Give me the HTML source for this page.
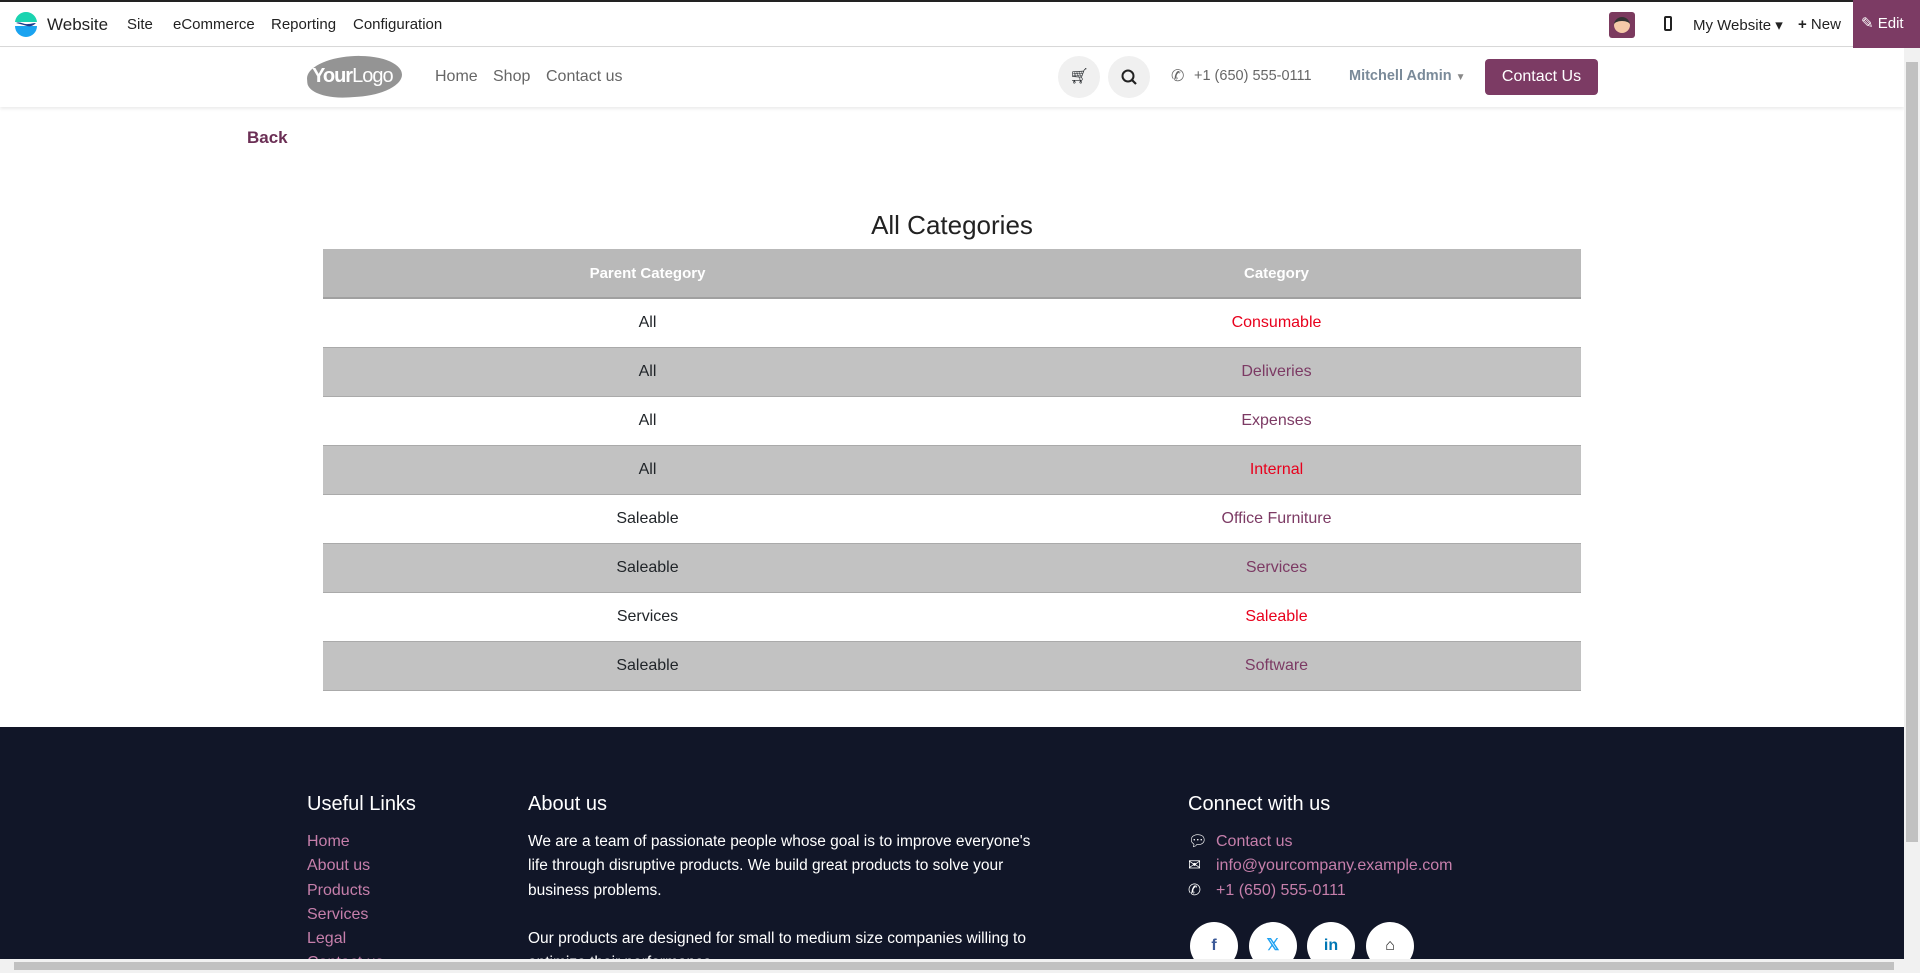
<!DOCTYPE html>
<html><head><meta charset="utf-8">
<style>
*{box-sizing:border-box;margin:0;padding:0}
body{width:1920px;height:973px;overflow:hidden;font-family:"Liberation Sans",sans-serif;background:#fff;position:relative;color:#212529}
.a{position:absolute;white-space:nowrap}
#top{position:absolute;left:0;top:0;width:1920px;height:47px;background:#fff;border-top:2px solid #222;border-bottom:1px solid #d8d8d8}
#top .t{font-size:15px;color:#222;top:14px}
#hdr{position:absolute;left:0;top:48px;width:1904px;height:59px;background:#fff;box-shadow:0 2px 3px rgba(0,0,0,.08)}
.nav{font-size:16px;color:#666;top:20px}
.circ{position:absolute;top:8px;width:42px;height:42px;border-radius:50%;background:#f0f0f0}
table{position:absolute;left:323px;top:249px;width:1258px;border-collapse:collapse;font-size:16px}
td,th{height:49px;text-align:center;width:50%;border-bottom:1px solid #aaa;padding-left:20px}
th{background:#b9b9b9;color:#fff;font-weight:bold;font-size:15px;border-bottom:2px solid #a0a0a0}
tr.g td{background:#c2c2c2}
.r{color:#e8001c}.p{color:#7c3a64}
#foot{position:absolute;left:0;top:727px;width:1904px;height:246px;background:#111628;color:#fff}
#foot h4{position:absolute;font-weight:normal;font-size:20px;top:66px}
.fl{font-size:16px;color:#c67fab;line-height:24.3px}
.ft{font-size:15.5px;line-height:24.3px;color:#fff}
.soc{position:absolute;top:195px;width:48px;height:48px;border-radius:50%;background:#fff;text-align:center;line-height:48px;font-size:16px;font-weight:bold}
</style></head><body>
<div id="top">
 <svg class="a" style="left:13px;top:9px" width="26" height="27" viewBox="0 0 26 27"><path d="M13 1a11 11 0 0 0-11 10h22A11 11 0 0 0 13 1z" fill="#1ad3b0"/><path d="M2 15h22a11 11 0 0 1-22 0z" fill="#1aa3f0"/><path d="M3 12c4-2 8 2 12 1 3 0 5-1 8-1-3 3-6 4-9 3s-7-2-11-3z" fill="#1c3d8c"/></svg>
 <span class="a" style="left:47px;top:13px;font-size:17px;color:#222">Website</span>
 <span class="a t" style="left:127px">Site</span>
 <span class="a t" style="left:173px">eCommerce</span>
 <span class="a t" style="left:271px">Reporting</span>
 <span class="a t" style="left:353px">Configuration</span>
 <div class="a" style="left:1609px;top:10px;width:26px;height:26px;background:#7b3a5e;border-radius:3px"><div style="margin:5px auto;width:16px;height:16px;border-radius:50%;background:#f5c9a8;border-top:4px solid #333"></div></div>
 <div class="a" style="left:1664px;top:14px;width:8px;height:15px;border:2px solid #222;border-radius:2px"></div>
 <span class="a t" style="left:1693px">My Website ▾</span>
 <span class="a t" style="left:1798px"><b>+</b> New</span>
 <div class="a" style="left:1853px;top:-2px;width:67px;height:48px;background:#7c3b64;color:#fff;font-size:15px;line-height:48px;padding-left:8px">✎ Edit</div>
</div>
<div id="hdr">
 <div class="a" style="left:307px;top:8px;width:95px;height:41px;background:#949494;border-radius:50% 55% 50% 45%;transform:rotate(-4deg)"></div>
 <span class="a" style="left:312px;top:17px;font-size:20px;color:#fff;letter-spacing:-1px"><b>Your</b>Logo</span>
 <span class="a nav" style="left:435px">Home</span>
 <span class="a nav" style="left:493px">Shop</span>
 <span class="a nav" style="left:546px">Contact us</span>
 <div class="circ" style="left:1058px;text-align:center;line-height:42px;font-size:15px">🛒︎</div>
 <div class="circ" style="left:1108px"><svg width="42" height="42"><circle cx="20" cy="20" r="5.5" fill="none" stroke="#222" stroke-width="2"/><path d="M24 24l4 4" stroke="#222" stroke-width="2.2"/></svg></div>
 <span class="a" style="left:1171px;top:18px;font-size:16px;color:#666">✆</span>
 <span class="a" style="left:1194px;top:20px;font-size:14.5px;color:#666">+1 (650) 555-0111</span>
 <span class="a" style="left:1349px;top:20px;font-size:14.5px;color:#7a8a99;font-weight:bold">Mitchell Admin <span style="font-size:10px;color:#888">▼</span></span>
 <div class="a" style="left:1485px;top:11px;width:113px;height:36px;background:#7c3b64;border-radius:4px;color:#fff;font-size:16px;text-align:center;line-height:36px">Contact Us</div>
</div>
<div class="a" style="left:1904px;top:48px;width:16px;height:911px;background:#f1f1f1"><div style="margin:14px 2px;height:780px;background:#c1c1c1"></div></div>
<div class="a" style="left:0;top:959px;width:1920px;height:14px;background:#f1f1f1;z-index:3"><div style="margin:3px 14px;height:8px;width:1880px;background:#c1c1c1"></div></div>
<span class="a" style="left:247px;top:128px;font-size:17px;font-weight:bold;color:#6b2f55">Back</span>
<span class="a" style="left:0;width:1904px;text-align:center;top:210px;font-size:26px;color:#222">All Categories</span>
<table>
<tr><th>Parent Category</th><th>Category</th></tr>
<tr><td>All</td><td class="r">Consumable</td></tr>
<tr class="g"><td>All</td><td class="p">Deliveries</td></tr>
<tr><td>All</td><td class="p">Expenses</td></tr>
<tr class="g"><td>All</td><td class="r">Internal</td></tr>
<tr><td>Saleable</td><td class="p">Office Furniture</td></tr>
<tr class="g"><td>Saleable</td><td class="p">Services</td></tr>
<tr><td>Services</td><td class="r">Saleable</td></tr>
<tr class="g"><td>Saleable</td><td class="p">Software</td></tr>
</table>
<div id="foot">
 <h4 style="left:307px">Useful Links</h4>
 <h4 style="left:528px">About us</h4>
 <h4 style="left:1188px">Connect with us</h4>
 <div class="a fl" style="left:307px;top:103px">Home<br>About us<br>Products<br>Services<br>Legal<br>Contact us</div>
 <div class="a ft" style="left:528px;top:103px">We are a team of passionate people whose goal is to improve everyone's<br>life through disruptive products. We build great products to solve your<br>business problems.<br><br>Our products are designed for small to medium size companies willing to<br>optimize their performance.</div>
 <div class="a ft" style="left:1188px;top:103px">💬︎<br>✉︎<br>✆</div>
 <div class="a fl" style="left:1216px;top:103px">Contact us<br>info@yourcompany.example.com<br>+1 (650) 555-0111</div>
 <div class="soc" style="left:1190px;color:#3b5998">f</div>
 <div class="soc" style="left:1249px;color:#1da1f2">𝕏</div>
 <div class="soc" style="left:1307px;color:#0077b5">in</div>
 <div class="soc" style="left:1366px;color:#222">⌂</div>
</div>
</body></html>
